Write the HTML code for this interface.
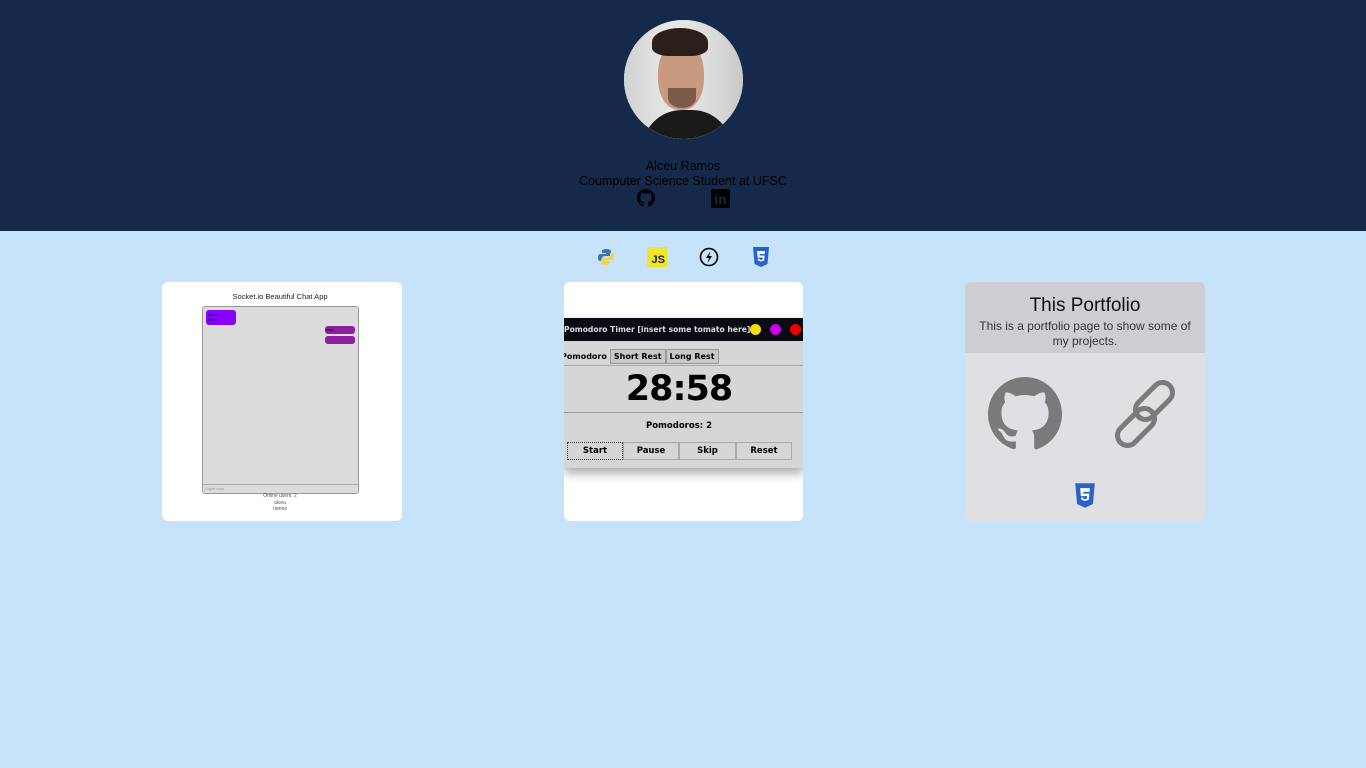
<!DOCTYPE html>
<html><head><meta charset="utf-8"><style>
*{margin:0;padding:0;box-sizing:border-box}
body{width:1366px;height:768px;background:#c6e3f9;font-family:"Liberation Sans",sans-serif;position:relative;overflow:hidden}
.hdr{position:absolute;left:0;top:0;width:1366px;height:231px;background:#15294b}
.av{position:absolute;left:624px;top:20px;width:119px;height:119px;border-radius:50%;overflow:hidden;background:#e6e6e4}
.t{position:absolute;width:1366px;text-align:center;color:#000;font-size:12.5px}
.card{position:absolute;top:282px;width:240px;height:239px;border-radius:6px;background:#fff;overflow:hidden}
.ab{position:absolute}
</style></head><body>
<div class="hdr"></div>
<div class="av">
 <div class="ab" style="left:0;top:0;width:119px;height:119px;background:linear-gradient(90deg,#cfd2d2 0,#e9e9e7 40%,#dadcdc 75%,#c8c8c6 100%)"></div>
 <div class="ab" style="left:18px;top:90px;width:90px;height:50px;border-radius:40px 40px 0 0;background:#1a1a1a"></div>
 <div class="ab" style="left:34px;top:22px;width:46px;height:68px;border-radius:45%;background:#c99a82"></div>
 <div class="ab" style="left:28px;top:8px;width:56px;height:28px;border-radius:50% 50% 30% 30%;background:#2b1f1a"></div>
 <div class="ab" style="left:44px;top:68px;width:28px;height:20px;border-radius:0 0 50% 50%;background:#5a3e30;opacity:.7"></div>
</div>
<div class="t" style="top:159px">Alceu Ramos</div>
<div class="t" style="top:174px">Coumputer Science Student at UFSC</div>
<svg class="ab" style="left:637px;top:189px" width="18" height="18" viewBox="0 0 16 16"><path fill="#000" d="M8 0C3.58 0 0 3.58 0 8c0 3.54 2.29 6.53 5.47 7.59.4.07.55-.17.55-.38v-1.33c-2.23.48-2.7-1.07-2.7-1.07-.36-.92-.89-1.170-.89-1.17-.73-.5.05-.49.05-.49.8.06 1.23.83 1.23.83.71 1.22 1.87.87 2.33.66.07-.52.28-.87.5-1.07-1.78-.2-3.64-.89-3.64-3.95 0-.87.31-1.59.82-2.15-.08-.2-.36-1.02.08-2.12 0 0 .67-.21 2.2.82a7.6 7.6 0 014 0c1.53-1.04 2.2-.82 2.2-.82.44 1.1.16 1.92.08 2.12.51.56.82 1.27.82 2.15 0 3.07-1.87 3.75-3.65 3.95.29.25.54.73.54 1.48v2.2c0 .21.15.46.55.38A8.01 8.01 0 0016 8c0-4.42-3.58-8-8-8z"/></svg>
<div class="ab" style="left:711px;top:189px;width:19px;height:19px;background:#000;border-radius:2px;color:#15294b;font-weight:bold;font-size:14px;line-height:20px;text-align:center">in</div>
<svg class="ab" style="left:597px;top:248px" width="18" height="18" viewBox="0 0 18 18"><path fill="#3c78b0" d="M9 1C5 1 5 3 5 3v2h4v1H3S1 6 1 9.5 3 13 3 13h2v-2.5S5 8 8 8h4s2 0 2-2V3s0-2-5-2z"/><path fill="#f7d43a" d="M9 17c4 0 4-2 4-2v-2H9v-1h6s2 0 2-3.5S15 5 15 5h-2v2.5S13 10 10 10H6s-2 0-2 2v3s0 2 5 2z"/></svg>
<div class="ab" style="left:647px;top:247px;width:20px;height:20px;background:#f0e52a;font-weight:bold;font-size:11px;line-height:26px;text-align:right;padding-right:2px;color:#222">JS</div>
<svg class="ab" style="left:699px;top:247px" width="20" height="20" viewBox="0 0 20 20"><circle cx="10" cy="10" r="8.5" fill="none" stroke="#000" stroke-width="1.6"/><path d="M11.5 4 7 11h3l-1.5 5L13 9h-3z" fill="#000"/></svg>
<svg class="ab" style="left:752px;top:247px" width="18" height="20" viewBox="0 0 18 20"><path fill="#2a5fd0" d="M1 0h16l-1.5 17L9 20l-6.5-3z"/><path fill="#fff" d="M5 4h8l-.3 3H7.5l.1 1.5h5l-.5 5L9 14.5l-3-1-.2-2h1.6l.1 1 1.5.5 1.6-.5.2-2H5.6L5.2 5.5z"/></svg>
<div class="card" style="left:162px">
 <div class="ab" style="left:0;top:10px;width:236px;text-align:center;font-size:7.5px;color:#222">Socket.io Beautiful Chat App</div>
 <div class="ab" style="left:40px;top:24px;width:157px;height:188px;background:#dcdcdc;border:1px solid #999;border-radius:3px"></div>
 <div class="ab" style="left:41px;top:202px;width:155px;height:1px;background:#aaa"></div>
 <div class="ab" style="left:43px;top:204px;font-size:4px;color:#999">Digite aqui</div>
 <div class="ab" style="left:44px;top:28px;width:30px;height:15px;background:#8800ff;border-radius:3px;font-size:4px;padding:2px">alceu<br>hello</div>
 <div class="ab" style="left:163px;top:44px;width:30px;height:8px;background:#8f1fa0;border-radius:3px;font-size:4px;padding:1px">hey!</div>
 <div class="ab" style="left:163px;top:54px;width:30px;height:8px;background:#8f1fa0;border-radius:3px"></div>
 <div class="ab" style="left:0;top:211px;width:236px;text-align:center;font-size:5px;color:#555;line-height:6.5px">Online users: 2<br>alceu<br>ramos</div>
</div>
<div class="card" style="left:564px;width:239px">
 <div class="ab" style="left:0;top:36px;width:240px;height:150px;background:#d6d6d6;box-shadow:0 5px 10px rgba(0,0,0,.35)"></div>
 <div class="ab" style="left:0;top:36px;width:240px;height:23px;background:#0b0b14;color:#ddd;font-size:7.6px;font-weight:bold;line-height:23px;font-family:'DejaVu Sans',sans-serif;white-space:nowrap;overflow:hidden">Pomodoro Timer [insert some tomato here]</div>
 <div class="ab" style="left:186px;top:42px;width:11px;height:11px;border-radius:50%;background:#f5e000"></div>
 <div class="ab" style="left:206px;top:42px;width:11px;height:11px;border-radius:50%;background:#cc00ee"></div>
 <div class="ab" style="left:226px;top:42px;width:11px;height:11px;border-radius:50%;background:#ee0000"></div>
 <div class="ab" style="left:0;top:67px;font-family:'DejaVu Sans',sans-serif;font-weight:bold;font-size:8px;white-space:nowrap"><span style="display:inline-block;padding:2px 3px 2px 0;margin-left:-3px">Pomodoro</span><span style="display:inline-block;padding:2px 3px;background:#c8c8c8;border:1px solid #999">Short Rest</span><span style="display:inline-block;padding:2px 3px;background:#c8c8c8;border:1px solid #999">Long Rest</span></div>
 <div class="ab" style="left:0;top:83px;width:240px;height:1px;background:#aaa"></div>
 <div class="ab" style="left:0;top:84px;width:230px;text-align:center;font-family:'DejaVu Sans',sans-serif;font-weight:bold;font-size:35px;line-height:46px;letter-spacing:-1px">28:58</div>
 <div class="ab" style="left:0;top:130px;width:240px;height:1px;background:#999"></div>
 <div class="ab" style="left:0;top:139px;width:230px;text-align:center;font-family:'DejaVu Sans',sans-serif;font-weight:bold;font-size:8.5px">Pomodoros: 2</div>
 <div class="ab" style="left:3px;top:160px;font-family:'DejaVu Sans',sans-serif;font-weight:bold;font-size:8.5px;display:flex">
  <div style="width:56px;height:18px;border:1px dotted #333;text-align:center;line-height:16px">Start</div>
  <div style="width:56px;height:18px;border:1px solid #aaa;text-align:center;line-height:16px">Pause</div>
  <div style="width:57px;height:18px;border:1px solid #aaa;text-align:center;line-height:16px">Skip</div>
  <div style="width:56px;height:18px;border:1px solid #aaa;text-align:center;line-height:16px">Reset</div>
 </div>
</div>
<div class="card" style="left:965px;background:#dfe0e4">
 <div class="ab" style="left:0;top:0;width:240px;height:71px;background:#cdced3"></div>
 <div class="ab" style="left:0;top:13px;width:240px;text-align:center;font-size:19px;color:#111">This Portfolio</div>
 <div class="ab" style="left:0;top:37px;width:240px;text-align:center;font-size:12px;line-height:15px;color:#333">This is a portfolio page to show some of<br>my projects.</div>
 <svg class="ab" style="left:22px;top:95px" width="76" height="74" viewBox="0 0 16 16"><path fill="#7a7a7a" d="M8 0C3.58 0 0 3.58 0 8c0 3.54 2.29 6.53 5.47 7.59.4.07.55-.17.55-.38v-1.33c-2.23.48-2.7-1.07-2.7-1.07-.36-.92-.89-1.17-.89-1.17-.73-.5.05-.49.05-.49.8.06 1.23.83 1.23.83.71 1.22 1.87.87 2.33.66.07-.52.28-.87.5-1.07-1.78-.2-3.64-.89-3.64-3.95 0-.87.31-1.59.82-2.15-.08-.2-.36-1.02.08-2.12 0 0 .67-.21 2.2.82a7.6 7.6 0 014 0c1.53-1.04 2.2-.82 2.2-.82.44 1.1.16 1.92.08 2.12.51.56.82 1.27.82 2.15 0 3.07-1.87 3.75-3.65 3.95.29.25.54.73.54 1.48v2.2c0 .21.15.46.55.38A8.01 8.01 0 0016 8c0-4.42-3.58-8-8-8z"/></svg>
 <svg class="ab" style="left:145px;top:97px;overflow:visible" width="70" height="70" viewBox="0 0 70 70"><g fill="none" stroke="#7a7a7a" stroke-width="5" stroke-linecap="round"><rect x="34" y="0" width="20" height="44" rx="10" transform="rotate(45 44 22)"/><rect x="16" y="26" width="20" height="44" rx="10" transform="rotate(45 26 48)"/></g></svg>
 <svg class="ab" style="left:109px;top:201px" width="22" height="25" viewBox="0 0 18 20"><path fill="#2a5fd0" d="M1 0h16l-1.5 17L9 20l-6.5-3z"/><path fill="#fff" d="M5 4h8l-.3 3H7.5l.1 1.5h5l-.5 5L9 14.5l-3-1-.2-2h1.6l.1 1 1.5.5 1.6-.5.2-2H5.6L5.2 5.5z"/></svg>
</div>
</body></html>
